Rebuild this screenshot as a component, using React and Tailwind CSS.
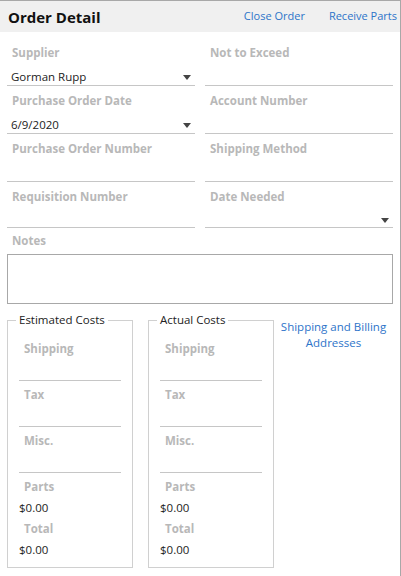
import React from 'react';

const font = { fontFamily: '"Open Sans", "Noto Sans", sans-serif' };

function Caret() {
  return (
    <svg width="8" height="5" viewBox="0 0 8 5" className="shrink-0">
      <path d="M0 0 H8 L4 5 Z" fill="#444" />
    </svg>
  );
}

function Field({ label, value, dropdown, valueH = 'h-[24px]' }) {
  return (
    <div className="pt-[7px] border-b border-[#c6c6c6]">
      <div className="pl-[5px] h-[16px] leading-[16px] text-[11.5px] font-bold text-[#b8b8b8]">
        {label}
      </div>
      <div className={`${valueH} pt-[8px] pl-[4px] pr-[4px] flex items-center justify-between`}>
        <span className="leading-[16px] text-[11.5px] text-[#222]">{value}</span>
        {dropdown && <Caret />}
      </div>
    </div>
  );
}

function CostField({ label, first }) {
  return (
    <div className={`${first ? 'pt-[13px]' : 'pt-[6px]'} border-b border-[#c6c6c6]`}>
      <div className="pl-[5px] h-[16px] leading-[16px] text-[11.5px] font-bold text-[#b8b8b8]">
        {label}
      </div>
      <div className="h-[23px]" />
    </div>
  );
}

function CostBox({ title }) {
  return (
    <fieldset className="w-[126px] border border-[#d0d0d0] px-[8px] pb-[9px]">
      <legend className="px-[3px] leading-[16px] text-[11.5px] text-[#222]">{title}</legend>
      <div className="px-[3px]">
        <CostField label="Shipping" first />
        <CostField label="Tax" />
        <CostField label="Misc." />
        <div className="pt-[6px] pl-[5px] h-[22px] leading-[16px] text-[11.5px] font-bold text-[#b8b8b8]">Parts</div>
        <div className="pt-[5px] leading-[16px] text-[11.5px] text-[#222]">$0.00</div>
        <div className="pt-[5px] pl-[5px] leading-[16px] text-[11.5px] font-bold text-[#b8b8b8]">Total</div>
        <div className="pt-[5px] leading-[16px] text-[11.5px] text-[#222]">$0.00</div>
      </div>
    </fieldset>
  );
}

export default function App() {
  return (
    <div className="w-[401px] h-[576px] bg-white border-t border-r border-[#a8a8a8] overflow-hidden" style={font}>
      {/* Header */}
      <div className="h-[31px] bg-[#f0f0f0] flex items-center pl-[8px] pr-[3px]">
        <h1 className="text-[15px] font-bold text-[#111] leading-[20px]">Order Detail</h1>
        <div className="ml-auto flex items-center gap-[24px] text-[11px] text-[#2d74c9]">
          <span>Close Order</span>
          <span>Receive Parts</span>
        </div>
      </div>

      {/* Form */}
      <div className="px-[7px] pt-[6px]">
        <div className="grid grid-cols-2 gap-x-[10px]">
          <Field label="Supplier" value="Gorman Rupp" dropdown />
          <Field label="Not to Exceed" />
          <Field label="Purchase Order Date" value="6/9/2020" dropdown />
          <Field label="Account Number" />
          <Field label="Purchase Order Number" />
          <Field label="Shipping Method" />
          <Field label="Requisition Number" valueH="h-[22px]" />
          <Field label="Date Needed" dropdown valueH="h-[22px]" />
        </div>

        <div className="pt-[5px] pl-[5px] h-[21px] leading-[16px] text-[11.5px] font-bold text-[#b8b8b8]">Notes</div>
        <div className="mt-[5px] h-[50px] border border-[#a8a8a8]" />

        <div className="mt-[8px] flex">
          <CostBox title="Estimated Costs" />
          <div className="w-[15px]" />
          <CostBox title="Actual Costs" />
          <div className="flex-1 pt-[7px] text-center text-[11.5px] leading-[16px] text-[#2d74c9]">
            Shipping and Billing
            <br />
            Addresses
          </div>
        </div>
      </div>
    </div>
  );
}
